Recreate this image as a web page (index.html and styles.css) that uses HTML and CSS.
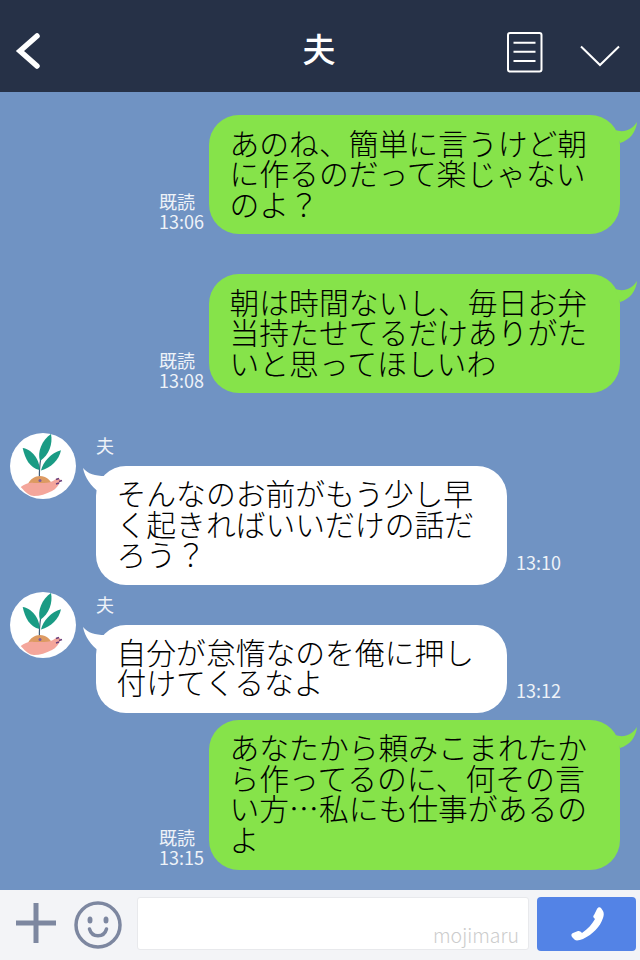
FILE: index.html
```html
<!DOCTYPE html>
<html lang="ja">
<head>
    <meta charset="utf-8">
    <title>夫</title>
    <link rel="stylesheet" href="styles.css">
</head>
<body>
    <div class="phone">
        <div class="navbar">
            <svg class="nav-back" width="28" height="40" viewBox="0 0 28 40">
                <path d="M23 5 L6 20 L23 35" fill="none" stroke="#fff" stroke-width="5.5" stroke-linecap="round" stroke-linejoin="miter"/>
            </svg>
            <div class="nav-title">夫</div>
            <svg class="nav-menu" width="36" height="41" viewBox="0 0 36 41">
                <rect x="1" y="1" width="33.5" height="38.5" rx="2" fill="none" stroke="#fff" stroke-width="2"/>
                <path d="M6.500 10.700 H28.500 M6.500 19.800 H28.500 M6.500 29 H28.500" stroke="#fff" stroke-width="2"/>
            </svg>
            <svg class="nav-down" width="40" height="22" viewBox="0 0 40 22">
                <path d="M1 1.500 L20 20 L39 1.500" fill="none" stroke="#fff" stroke-width="2"/>
            </svg>
        </div>

        <div class="chat">
            <div class="row row-me">
                <div class="meta">既読<br>13:06</div>
                <div class="bubble bubble-me">あのね、簡単に言うけど朝<br>に作るのだって楽じゃない<br>のよ？
                    <svg class="tail-me" width="26" height="26" viewBox="0 0 26 26"><path d="M3 10 C12 13 20 10 25 2 C24 12 18 20 8 23 Z" fill="#86e34a"/></svg>
                </div>
            </div>

            <div class="row row-me gap-big">
                <div class="meta">既読<br>13:08</div>
                <div class="bubble bubble-me">朝は時間ないし、毎日お弁<br>当持たせてるだけありがた<br>いと思ってほしいわ
                    <svg class="tail-me" width="26" height="26" viewBox="0 0 26 26"><path d="M3 10 C12 13 20 10 25 2 C24 12 18 20 8 23 Z" fill="#86e34a"/></svg>
                </div>
            </div>

            <div class="row row-you gap-big">
                <svg class="avatar" width="66" height="66" viewBox="0 0 66 66">
                    <circle cx="33" cy="33" r="33" fill="#fff"/>
                    <path d="M29.500 46 C29 38 30 30 31 24" fill="none" stroke="#3d5a78" stroke-width="1.200"/>
                    <path d="M29.500 37 C20 35 15 26 12.700 15 C21 16 30 26 29.500 37 Z" fill="#1a9b84"/>
                    <path d="M30 28 C27 19 32 7 41 1 C43 11 39 22 30 28 Z" fill="#1a9b84"/>
                    <path d="M31 37.500 C33 29 41 20 51 17.300 C49 27 41 35 31 37.500 Z" fill="#1a9b84"/>
                    <path d="M18 51 C20 46 25 43 30 43 C36 43 40 47 42 51 Z" fill="#dd9a62"/>
                    <path d="M10.700 54 C15 51 19 49 24 50 L34 50 C38 50 42 49 46 46 C49 44.500 51 46 50.500 48 C49 52 46 56 42 58 C36 61 30 63 24 63 C20 63 16 60 10.700 54 Z" fill="#f4a69b"/>
                    <circle cx="30" cy="47.500" r="1.500" fill="#7a5a9c"/>
                    <path d="M46 46.500 L49 45.500 M49 48.500 L52 47.500 M46 51 L49 50" stroke="#6a3f7c" stroke-width="1.500"/>
                </svg>
                <div class="you-body">
                    <div class="name">夫</div>
                    <div class="you-line">
                        <div class="bubble bubble-you">そんなのお前がもう少し早<br>く起きればいいだけの話だ<br>ろう？
                            <svg class="tail-you" width="22" height="26" viewBox="0 0 22 26"><path d="M0 0 C5 6 12 8 22 8 L22 22 L16 24 C8 18 2 10 0 0 Z" fill="#fff"/></svg>
                        </div>
                        <div class="time">13:10</div>
                    </div>
                </div>
            </div>

            <div class="row row-you gap-small">
                <svg class="avatar" width="66" height="66" viewBox="0 0 66 66">
                    <circle cx="33" cy="33" r="33" fill="#fff"/>
                    <path d="M29.500 46 C29 38 30 30 31 24" fill="none" stroke="#3d5a78" stroke-width="1.200"/>
                    <path d="M29.500 37 C20 35 15 26 12.700 15 C21 16 30 26 29.500 37 Z" fill="#1a9b84"/>
                    <path d="M30 28 C27 19 32 7 41 1 C43 11 39 22 30 28 Z" fill="#1a9b84"/>
                    <path d="M31 37.500 C33 29 41 20 51 17.300 C49 27 41 35 31 37.500 Z" fill="#1a9b84"/>
                    <path d="M18 51 C20 46 25 43 30 43 C36 43 40 47 42 51 Z" fill="#dd9a62"/>
                    <path d="M10.700 54 C15 51 19 49 24 50 L34 50 C38 50 42 49 46 46 C49 44.500 51 46 50.500 48 C49 52 46 56 42 58 C36 61 30 63 24 63 C20 63 16 60 10.700 54 Z" fill="#f4a69b"/>
                    <circle cx="30" cy="47.500" r="1.500" fill="#7a5a9c"/>
                    <path d="M46 46.500 L49 45.500 M49 48.500 L52 47.500 M46 51 L49 50" stroke="#6a3f7c" stroke-width="1.500"/>
                </svg>
                <div class="you-body">
                    <div class="name">夫</div>
                    <div class="you-line">
                        <div class="bubble bubble-you">自分が怠惰なのを俺に押し<br>付けてくるなよ
                            <svg class="tail-you" width="22" height="26" viewBox="0 0 22 26"><path d="M0 0 C5 6 12 8 22 8 L22 22 L16 24 C8 18 2 10 0 0 Z" fill="#fff"/></svg>
                        </div>
                        <div class="time">13:12</div>
                    </div>
                </div>
            </div>

            <div class="row row-me gap-small">
                <div class="meta">既読<br>13:15</div>
                <div class="bubble bubble-me">あなたから頼みこまれたか<br>ら作ってるのに、何その言<br>い方…私にも仕事があるの<br>よ
                    <svg class="tail-me" width="26" height="26" viewBox="0 0 26 26"><path d="M3 10 C12 13 20 10 25 2 C24 12 18 20 8 23 Z" fill="#86e34a"/></svg>
                </div>
            </div>
        </div>

        <div class="footer">
            <svg class="foot-plus" width="40" height="40" viewBox="0 0 40 40">
                <path d="M20 0 V40 M0 20 H40" stroke="#7d87a0" stroke-width="5"/>
            </svg>
            <svg class="foot-smile" width="48" height="48" viewBox="0 0 48 48">
                <circle cx="24" cy="24" r="22" fill="none" stroke="#7d87a0" stroke-width="3.500"/>
                <ellipse cx="16" cy="19" rx="2.500" ry="3.500" fill="#7d87a0"/>
                <ellipse cx="32" cy="19" rx="2.500" ry="3.500" fill="#7d87a0"/>
                <path d="M15.500 28 C18 37 30 37 32.500 28" fill="none" stroke="#7d87a0" stroke-width="3.500" stroke-linecap="round"/>
            </svg>
            <div class="input-box">mojimaru</div>
            <div class="send">
                <svg width="38" height="38" viewBox="0 0 38 38">
                    <path d="M29 4 C30 2 32 2 33 3 L35 6 C36 8 36 10 35 13 C32 22 25 29 15 34 C12 35 9 36 7 35 L4 32 C3 30 3 29 5 28 L10 26 C11 26 12 26 13 27 L14 28 C20 24 24 19 27 14 L26 13 C25 12 25 11 26 10 Z" fill="#fff"/>
                </svg>
            </div>
        </div>
    </div>
</body>
</html>
```

FILE: styles.css
```css
body {
    margin: 0;
    padding: 0;
    font-family: "Noto Sans CJK JP", "Noto Sans", sans-serif;
    background-color: #7093c3;
}

.phone {
    width: 640px;
    height: 960px;
    display: flex;
    flex-direction: column;
    overflow: hidden;
}

.navbar {
    height: 92px;
    flex: none;
    background-color: #263147;
    display: flex;
    align-items: center;
    position: relative;
}

.nav-back {
    margin-left: 14px;
    margin-top: 9px;
}

.nav-title {
    position: absolute;
    left: 0;
    right: 2px;
    text-align: center;
    color: #fff;
    font-size: 33px;
    font-weight: 500;
    line-height: 92px;
    top: 2px;
}

.nav-menu {
    margin-left: auto;
    margin-top: 13px;
}

.nav-down {
    margin-left: 37px;
    margin-right: 20px;
    margin-top: 20px;
}

.chat {
    flex: 1;
    padding: 23px 20px 0 10px;
    background-color: #7093c3;
}

.row {
    display: flex;
}

.row-me {
    justify-content: flex-end;
    align-items: flex-end;
}

.gap-big {
    margin-top: 40px;
}

.gap-small {
    margin-top: 7px;
}

.bubble {
    position: relative;
    width: 411px;
    box-sizing: border-box;
    font-size: 29.800px;
    font-weight: 300;
    line-height: 30.500px;
    color: #000;
    border-radius: 30px;
}

.bubble-me {
    background-color: #86e34a;
    padding: 11.500px 8px 16.200px 20.500px;
}

.bubble-you {
    background-color: #fff;
    padding: 11px 8px 16px 20.500px;
}

.tail-me {
    position: absolute;
    right: -18px;
    top: 5px;
}

.tail-you {
    position: absolute;
    left: -13px;
    top: 2px;
}

.meta {
    width: 50px;
    color: #eef2f8;
    font-size: 18px;
    line-height: 20px;
    padding-bottom: 3px;
}

.avatar {
    flex: none;
}

.you-body {
    margin-left: 20px;
}

.name {
    color: #eef2f8;
    font-size: 18px;
    line-height: 25px;
    height: 33px;
}

.you-line {
    display: flex;
    align-items: flex-end;
}

.time {
    color: #eef2f8;
    font-size: 18px;
    line-height: 22px;
    margin-left: 9px;
    margin-bottom: 12px;
}

.footer {
    height: 70px;
    flex: none;
    background-color: #f3f4f7;
    display: flex;
    align-items: center;
}

.foot-plus {
    margin-left: 16px;
    margin-bottom: 4px;
}

.foot-smile {
    margin-left: 18px;
}

.input-box {
    width: 392px;
    height: 53px;
    box-sizing: border-box;
    margin-left: 15px;
    margin-top: -3px;
    background-color: #fff;
    border: 1px solid #e8e9ec;
    border-radius: 3px;
    color: #ccc;
    font-size: 19.500px;
    font-weight: 300;
    text-align: right;
    padding-right: 9px;
    line-height: 74px;
    overflow: hidden;
}

.send {
    width: 99px;
    height: 54px;
    margin-left: 8px;
    margin-top: -3px;
    background-color: #5383e6;
    border-radius: 4px;
    display: flex;
    align-items: center;
    justify-content: center;
}
```
